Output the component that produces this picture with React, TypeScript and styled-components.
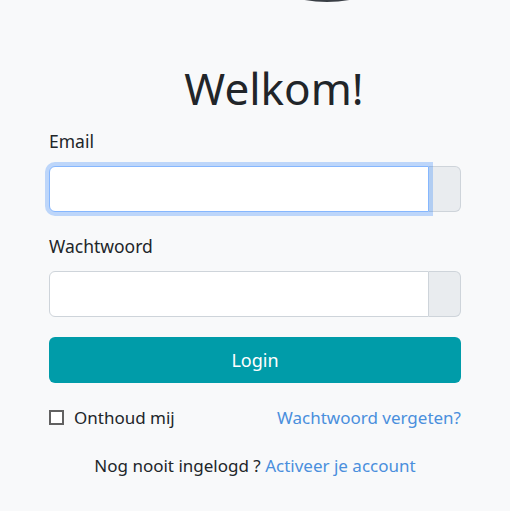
import React from "react";
import styled, { createGlobalStyle } from "styled-components";

const GlobalStyle = createGlobalStyle`
  html, body {
    margin: 0;
    padding: 0;
    background: #f8f9fa;
    font-family: "Noto Sans", "Open Sans", sans-serif;
    color: #212529;
  }
  * { box-sizing: border-box; }
`;

const Page = styled.div`
  width: 510px;
  height: 511px;
  overflow: hidden;
  position: relative;
`;

const LogoEdge = styled.svg`
  position: absolute;
  top: 0;
  left: 302px;
`;

const Form = styled.div`
  display: flex;
  flex-direction: column;
  padding: 58px 49px 0 49px;
`;

const Title = styled.h1`
  margin: 0 0 11px 0;
  padding-left: 38px;
  text-align: center;
  font-size: 44px;
  font-weight: 400;
  line-height: 60px;
  color: #212529;
`;

const Label = styled.label`
  font-size: 17.5px;
  line-height: 24px;
  margin-bottom: 13px;
  color: #212529;
`;

const Group = styled.div<{ $gap: number }>`
  display: flex;
  height: 46px;
  margin-bottom: ${({ $gap }) => $gap}px;
`;

const Input = styled.input<{ $focus?: boolean }>`
  flex: 1;
  min-width: 0;
  height: 100%;
  border: 1px solid ${({ $focus }) => ($focus ? "#86b7fe" : "#ced4da")};
  border-radius: 6px 0 0 6px;
  background: #fff;
  font-size: 16px;
  padding: 0 12px;
  outline: none;
  position: relative;
  z-index: 1;
  box-shadow: ${({ $focus }) =>
    $focus ? "0 0 0 4px rgba(13, 110, 253, 0.25)" : "none"};
`;

const Addon = styled.span`
  width: 32px;
  height: 100%;
  background: #e9ecef;
  border: 1px solid #ced4da;
  border-left: none;
  border-radius: 0 6px 6px 0;
`;

const LoginButton = styled.button`
  height: 46px;
  border: none;
  border-radius: 6px;
  background: #009ca9;
  color: #fff;
  font-family: inherit;
  font-size: 18px;
  margin-bottom: 22px;
`;

const Row = styled.div`
  display: flex;
  align-items: center;
  justify-content: space-between;
  height: 24px;
  margin-bottom: 25px;
`;

const Check = styled.label`
  display: flex;
  align-items: center;
  gap: 10px;
  font-size: 17px;
  color: #212529;
`;

const Box = styled.span`
  width: 15px;
  height: 15px;
  border: 2px solid #616161;
  background: #fff;
`;

const Link = styled.a`
  color: #4a8fdd;
  text-decoration: none;
  font-size: 17px;
`;

const Footer = styled.div`
  text-align: center;
  font-size: 17px;
  color: #212529;
`;

export default function App() {
  return (
    <Page>
      <GlobalStyle />
      <LogoEdge width="50" height="3" viewBox="0 0 50 3">
        <circle cx="25" cy="-124" r="126" fill="#3a3f45" />
      </LogoEdge>
      <Form>
        <Title>Welkom!</Title>
        <Label>Email</Label>
        <Group $gap={22}>
          <Input $focus />
          <Addon />
        </Group>
        <Label>Wachtwoord</Label>
        <Group $gap={20}>
          <Input type="password" />
          <Addon />
        </Group>
        <LoginButton>Login</LoginButton>
        <Row>
          <Check>
            <Box />
            Onthoud mij
          </Check>
          <Link href="#">Wachtwoord vergeten?</Link>
        </Row>
        <Footer>
          Nog nooit ingelogd ? <Link href="#">Activeer je account</Link>
        </Footer>
      </Form>
    </Page>
  );
}
